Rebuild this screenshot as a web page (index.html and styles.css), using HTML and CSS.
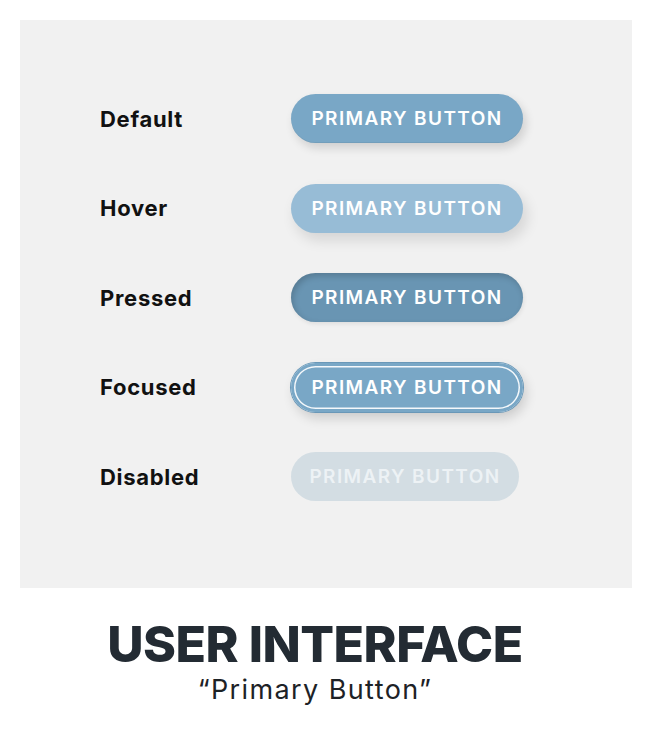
FILE: index.html
```html
<!DOCTYPE html>
<html lang="en">
<head>
  <meta charset="UTF-8" />
  <meta name="viewport" content="width=device-width, initial-scale=1.0" />
  <title>User Interface – Primary Button</title>
  <link rel="stylesheet" href="styles.css">
</head>
<body>

  <!-- Button states board -->
  <div class="board">
    <div class="state">
      <span class="state-label">Default</span>
      <button type="button" class="btn">Primary Button</button>
    </div>
    <div class="state">
      <span class="state-label">Hover</span>
      <button type="button" class="btn btn-hover">Primary Button</button>
    </div>
    <div class="state">
      <span class="state-label">Pressed</span>
      <button type="button" class="btn btn-pressed">Primary Button</button>
    </div>
    <div class="state">
      <span class="state-label">Focused</span>
      <button type="button" class="btn btn-focused">Primary Button</button>
    </div>
    <div class="state">
      <span class="state-label">Disabled</span>
      <button type="button" class="btn btn-disabled" disabled>Primary Button</button>
    </div>
  </div>

  <!-- Caption -->
  <div class="caption">
    <h1>USER INTERFACE</h1>
    <p>“Primary Button”</p>
  </div>

</body>
</html>
```

FILE: styles.css
```css
body, html {
  margin: 0;
  padding: 0;
  background: #fff;
  font-family: 'Inter', 'Noto Sans', sans-serif;
}
.board {
  margin: 20px 20px 0;
  height: 568px;
  box-sizing: border-box;
  padding: 74px 0 0 80px;
  background: #f1f1f1;
  display: flex;
  flex-direction: column;
  gap: 40.5px;
}
.state {
  display: grid;
  grid-template-columns: 191px auto;
  align-items: center;
  height: 49px;
}
.state-label {
  font-size: 22px;
  font-weight: 700;
  color: #111;
  letter-spacing: 0.7px;
}
.btn {
  width: 232px;
  height: 49px;
  padding: 0;
  border: none;
  border-radius: 25px;
  background: #79a7c6;
  color: #fff;
  font-family: 'Inter', 'Noto Sans', sans-serif;
  font-size: 19px;
  font-weight: 600;
  letter-spacing: 1.4px;
  text-transform: uppercase;
  box-shadow: 3px 5px 10px rgba(0, 0, 0, 0.14), inset 0 -1px 0 rgba(0, 0, 0, 0.05);
  cursor: pointer;
}
.btn-hover {
  background: #97bcd6;
  box-shadow: 4px 7px 14px rgba(0, 0, 0, 0.12);
}
.btn-pressed {
  background: #6995b3;
  box-shadow: inset 2px 3px 6px rgba(0, 0, 0, 0.18), 1px 2px 4px rgba(0, 0, 0, 0.08);
}
.btn-focused {
  box-shadow: inset 0 0 0 3px #79a7c6, inset 0 0 0 4.5px #f4f8fb, 0 0 0 1px #6a98b8, 3px 6px 12px rgba(0, 0, 0, 0.16);
}
.btn-disabled {
  width: 228px;
  background: #d3dde3;
  color: #edf2f5;
  box-shadow: none;
  cursor: default;
}
.caption {
  text-align: center;
  padding: 28px 22px 0 0;
  color: #232b33;
}
.caption h1 {
  margin: 0;
  font-size: 50px;
  font-weight: 800;
  letter-spacing: -0.5px;
  line-height: 56px;
}
.caption p {
  margin: 0;
  font-size: 27px;
  font-weight: 400;
  letter-spacing: 1.4px;
  color: #1d2226;
  line-height: 36px;
}
```
